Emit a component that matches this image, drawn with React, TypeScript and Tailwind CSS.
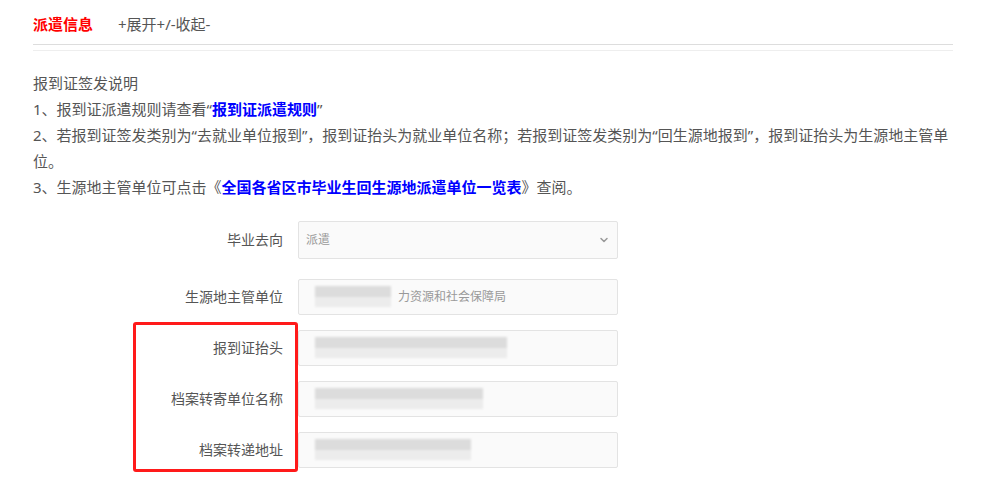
import { ChevronDown } from 'lucide-react';

const font = { fontFamily: '"Noto Sans", "Noto Sans CJK SC", sans-serif' };

const Blur = function({ width }: { width: number }) {
  return (
    <div className='flex flex-col blur-[1px]' style={{ width }}>
      <div className='h-[11px] bg-[#dcdcdc]' />
      <div className='h-[10px] bg-[#ececec]' />
    </div>
  );
};

const Row = function({ label, children, className = '' }: { label: string, children: React.ReactNode, className?: string }) {
  return (
    <div className={`flex items-center ${className}`}>
      <div className='w-[265px] pr-[15px] text-right text-[14px] text-[#555]'>{label}</div>
      {children}
    </div>
  );
};

const Field = function({ children }: { children?: React.ReactNode }) {
  return (
    <div className='flex h-[36px] w-[320px] items-center rounded-[2px] border border-[#e3e3e3] bg-[#fafafa] px-[16px] text-[12px] text-[#999]'>
      {children}
    </div>
  );
};

export default function App() {
  return (
    <div className='relative h-[486px] w-[985px] bg-white px-[33px] pt-[13px]' style={font}>
      <div className='flex items-center text-[15px]'>
        <span className='font-bold text-[#ff0000]'>派遣信息</span>
        <span className='ml-[25px] text-[#555]'>+展开+/-收起-</span>
      </div>
      <div className='mt-[8px] w-[920px] border-t border-[#dddddd]' />
      <div className='mt-[5px] w-[920px] border-t border-[#eeeeee]' />

      <div className='mt-[19px] text-[15px] leading-[26px] text-[#555]'>
        <p>报到证签发说明</p>
        <p>1、报到证派遣规则请查看“<a className='font-bold text-[#0000ff]'>报到证派遣规则</a>”</p>
        <p>2、若报到证签发类别为“去就业单位报到”，报到证抬头为就业单位名称；若报到证签发类别为“回生源地报到”，报到证抬头为生源地主管单位。</p>
        <p>3、生源地主管单位可点击《<a className='font-bold text-[#0000ff]'>全国各省区市毕业生回生源地派遣单位一览表</a>》查阅。</p>
      </div>

      <div className='mt-[21px] flex flex-col'>
        <Row label='毕业去向'>
          <div className='flex h-[38px] w-[320px] items-center justify-between rounded-[2px] border border-[#e3e3e3] bg-[#fafafa] pl-[7px] pr-[7px] text-[12px] text-[#999]'>
            <span>派遣</span>
            <ChevronDown className='h-[12px] w-[12px] text-[#999]' strokeWidth={3} />
          </div>
        </Row>
        <Row label='生源地主管单位' className='mt-[20px]'>
          <Field>
            <Blur width={76} />
            <span className='ml-[7px]'>力资源和社会保障局</span>
          </Field>
        </Row>
        <Row label='报到证抬头' className='mt-[15px]'>
          <Field><Blur width={192} /></Field>
        </Row>
        <Row label='档案转寄单位名称' className='mt-[15px]'>
          <Field><Blur width={168} /></Field>
        </Row>
        <Row label='档案转递地址' className='mt-[15px]'>
          <Field><Blur width={156} /></Field>
        </Row>
      </div>

      <div className='absolute left-[133px] top-[322px] h-[150px] w-[165px] rounded-[3px] border-[3px] border-[#ff1a1a]' />
    </div>
  );
}
